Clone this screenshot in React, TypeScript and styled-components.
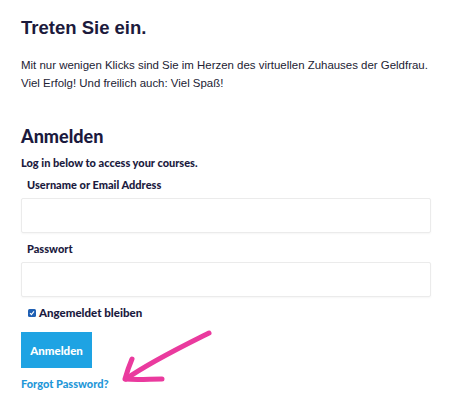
import React, { FC } from "react";
import styled, { createGlobalStyle } from "styled-components";

const GlobalStyle = createGlobalStyle`
  html, body {
    margin: 0;
    padding: 0;
    background: #fff;
  }
`;

const Page = styled.div`
  position: relative;
  width: 450px;
  height: 411px;
  box-sizing: border-box;
  padding: 16px 19px 0 21px;
  overflow: hidden;
`;

const Title = styled.h1`
  margin: 0;
  font-family: "Liberation Sans", Arial, sans-serif;
  font-size: 18.5px;
  line-height: 24px;
  font-weight: 700;
  color: #1c1a3c;
`;

const Intro = styled.p`
  margin: 16px 0 0;
  font-family: "Liberation Sans", Arial, sans-serif;
  font-size: 11.45px;
  line-height: 18px;
  white-space: nowrap;
  color: #222233;
`;

const Form = styled.form`
  display: flex;
  flex-direction: column;
  align-items: flex-start;
  margin-top: 33px;
  font-family: Lato, "Open Sans", sans-serif;
  color: #1b1a3e;
`;

const Heading = styled.h2`
  margin: 0;
  font-size: 18px;
  line-height: 22px;
  font-weight: 900;
`;

const Subtitle = styled.div`
  margin-top: 9px;
  font-size: 11px;
  line-height: 14px;
  font-weight: 900;
`;

const Label = styled.label<{ $gap: number }>`
  margin-top: ${(p) => p.$gap}px;
  padding-left: 6px;
  font-size: 11px;
  line-height: 14px;
  font-weight: 900;
`;

const Input = styled.input`
  box-sizing: border-box;
  margin-top: 6px;
  width: 410px;
  height: 35px;
  border: 1px solid #ebebeb;
  border-radius: 2px;
  box-shadow: 0 1px 2px rgba(0, 0, 0, 0.04);
  background: #fff;
  outline: none;
`;

const Remember = styled.label`
  display: flex;
  align-items: center;
  gap: 3px;
  margin-top: 9px;
  padding-left: 7px;
  font-size: 11.5px;
  line-height: 14px;
  font-weight: 900;
`;

const Check = styled.span`
  display: flex;
  align-items: center;
  justify-content: center;
  width: 8px;
  height: 8px;
  border-radius: 1.5px;
  background: #1f5fb3;
`;

const Button = styled.button`
  margin-top: 12px;
  width: 71px;
  height: 36px;
  border: none;
  background: #1ea3e3;
  color: #fff;
  font-family: Lato, "Open Sans", sans-serif;
  font-size: 11.5px;
  font-weight: 900;
  cursor: pointer;
`;

const Forgot = styled.a`
  margin-top: 9px;
  font-size: 11px;
  line-height: 14px;
  font-weight: 900;
  color: #1f97d8;
  text-decoration: none;
`;

const Arrow = styled.svg`
  position: absolute;
  left: 0;
  top: 0;
  pointer-events: none;
`;

const App: FC = () => (
  <Page>
    <GlobalStyle />
    <Title>Treten Sie ein.</Title>
    <Intro>
      Mit nur wenigen Klicks sind Sie im Herzen des virtuellen Zuhauses der Geldfrau.
      <br />
      Viel Erfolg! Und freilich auch: Viel Spaß!
    </Intro>
    <Form onSubmit={(e) => e.preventDefault()}>
      <Heading>Anmelden</Heading>
      <Subtitle>Log in below to access your courses.</Subtitle>
      <Label $gap={8}>Username or Email Address</Label>
      <Input type="text" />
      <Label $gap={9}>Passwort</Label>
      <Input type="password" />
      <Remember>
        <Check>
          <svg width="6" height="6" viewBox="0 0 6 6">
            <path d="M1 3.2 L2.4 4.6 L5 1.4" fill="none" stroke="#fff" strokeWidth="1.1" />
          </svg>
        </Check>
        Angemeldet bleiben
      </Remember>
      <Button type="submit">Anmelden</Button>
      <Forgot href="#">Forgot Password?</Forgot>
    </Form>
    <Arrow width="450" height="411" viewBox="0 0 450 411">
      <g fill="none" stroke="#ea3a9e" strokeWidth="5" strokeLinecap="round" strokeLinejoin="round">
        <path d="M209 333 C185 345 150 362 126 379" />
        <path d="M132 359 C129 366 127 372 125 379 C137 380 150 379 162 379" />
      </g>
    </Arrow>
  </Page>
);

export default App;
